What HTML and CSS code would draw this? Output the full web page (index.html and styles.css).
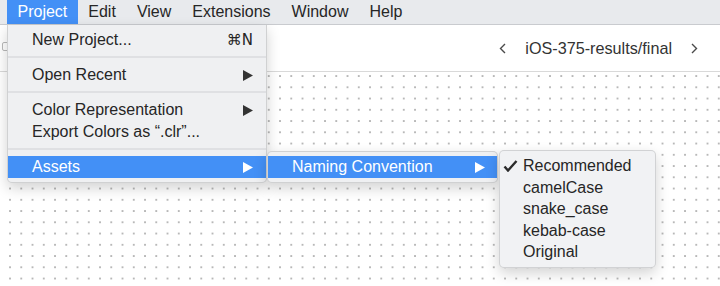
FILE: index.html
```html
<!DOCTYPE html>
<html lang="en">
  <head>
    <meta charset="UTF-8" />
    <meta name="viewport" content="width=device-width, initial-scale=1.0" />
    <title>Project menu</title>
    <link rel="stylesheet" href="styles.css">
  </head>
  <body>
    <div class="menubar">
      <span class="menubar-item active">Project</span>
      <span class="menubar-item">Edit</span>
      <span class="menubar-item">View</span>
      <span class="menubar-item">Extensions</span>
      <span class="menubar-item">Window</span>
      <span class="menubar-item">Help</span>
    </div>

    <div class="toolbar">
      <span class="toolbar-box"></span>
      <div class="breadcrumb">
        <svg class="chevron" width="7" height="11" viewBox="0 0 7 11">
          <polyline points="6,1 1.5,5.5 6,10" />
        </svg>
        <span class="breadcrumb-title">iOS-375-results/final</span>
        <svg class="chevron" width="7" height="11" viewBox="0 0 7 11">
          <polyline points="1,1 5.5,5.5 1,10" />
        </svg>
      </div>
    </div>

    <div class="canvas"></div>

    <div class="menu menu-main">
      <div class="menu-item">
        <span>New Project...</span>
        <span class="shortcut">⌘N</span>
      </div>
      <div class="separator"></div>
      <div class="menu-item">
        <span>Open Recent</span>
        <svg class="arrow" width="10" height="11" viewBox="0 0 10 11"><polygon points="0,0 10,5.5 0,11" /></svg>
      </div>
      <div class="separator"></div>
      <div class="menu-item">
        <span>Color Representation</span>
        <svg class="arrow" width="10" height="11" viewBox="0 0 10 11"><polygon points="0,0 10,5.5 0,11" /></svg>
      </div>
      <div class="menu-item">
        <span>Export Colors as “.clr”...</span>
      </div>
      <div class="separator"></div>
      <div class="menu-item selected">
        <span>Assets</span>
        <svg class="arrow" width="10" height="11" viewBox="0 0 10 11"><polygon points="0,0 10,5.5 0,11" /></svg>
      </div>
    </div>

    <div class="menu menu-sub">
      <div class="menu-item selected">
        <span>Naming Convention</span>
        <svg class="arrow" width="10" height="11" viewBox="0 0 10 11"><polygon points="0,0 10,5.5 0,11" /></svg>
      </div>
    </div>

    <div class="menu menu-options">
      <div class="option checked">
        <svg class="check" width="15" height="12" viewBox="0 0 15 12">
          <polyline points="1.5,6.5 5,10.5 13.5,1" />
        </svg>
        Recommended
      </div>
      <div class="option">camelCase</div>
      <div class="option">snake_case</div>
      <div class="option">kebab-case</div>
      <div class="option">Original</div>
    </div>
  </body>
</html>
```

FILE: styles.css
```css
body {
  margin: 0;
  height: 286px;
  overflow: hidden;
  font-family: "Liberation Sans", Arial, sans-serif;
  font-size: 16px;
  color: #262626;
  background-color: white;
}
.menubar {
  display: flex;
  height: 24px;
  padding-left: 7px;
  background-color: #e8eaed;
  border-bottom: 1px solid #c9cbcf;
}
.menubar-item {
  padding: 0 10.5px;
  line-height: 24px;
}
.menubar-item.active {
  background-color: #4390f6;
  color: white;
}
.toolbar {
  display: flex;
  align-items: center;
  justify-content: space-between;
  height: 46px;
  padding-right: 22px;
  border-bottom: 1px solid #d9d9d9;
}
.toolbar-box {
  width: 12px;
  height: 7px;
  margin-left: 2px;
  margin-top: -3px;
  border: 1px solid #b9b9b9;
  border-radius: 2px;
}
.breadcrumb {
  display: flex;
  align-items: center;
  gap: 19px;
  color: #333;
}
.breadcrumb-title {
  font-size: 16.2px;
}
.chevron polyline {
  fill: none;
  stroke: #4a4a4a;
  stroke-width: 1.4;
}
.canvas {
  height: 214px;
  background-image: radial-gradient(circle, #b8b8b8 0.7px, transparent 1.1px);
  background-size: 11.25px 11.25px;
  background-position: 4.4px -1.6px;
}
.menu {
  position: absolute;
  padding: 4px 0;
  background-color: #eff0f2;
  border: 1px solid rgba(0, 0, 0, 0.13);
  border-radius: 5px;
  box-shadow: 0 5px 14px rgba(0, 0, 0, 0.18);
  box-sizing: border-box;
}
.menu-main {
  left: 7px;
  top: 25px;
  width: 260px;
  border-top: none;
  border-radius: 0 0 5px 5px;
}
.menu-sub {
  left: 267px;
  top: 151px;
  width: 231px;
}
.menu-options {
  left: 499px;
  top: 150px;
  width: 157px;
  background-color: #f1f2f4;
}
.menu-item {
  display: flex;
  align-items: center;
  justify-content: space-between;
  height: 22px;
  padding: 0 13px 0 24px;
}
.menu-sub .menu-item {
  padding-right: 12px;
}
.menu-item.selected {
  background-color: #4390f6;
  color: white;
}
.arrow polygon {
  fill: #333;
}
.selected .arrow polygon {
  fill: white;
}
.shortcut {
  font-family: "DejaVu Sans", sans-serif;
  font-size: 15px;
}
.separator {
  height: 2px;
  margin: 5px 0 6px;
  background-color: #dfe0e3;
}
.option {
  position: relative;
  height: 21.5px;
  line-height: 21.5px;
  padding-left: 23px;
}
.check {
  position: absolute;
  left: 3px;
  top: 5px;
}
.check polyline {
  fill: none;
  stroke: #2b2b2b;
  stroke-width: 2.4;
}
```
